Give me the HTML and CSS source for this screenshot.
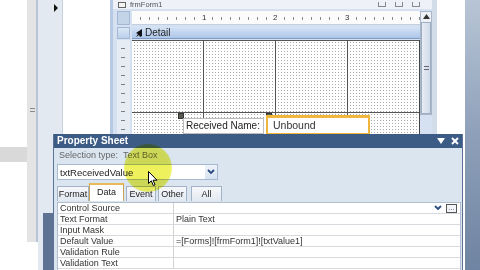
FILE: index.html
```html
<!DOCTYPE html>
<html>
<head>
<meta charset="utf-8">
<link rel="stylesheet" href="styles.css">
</head>
<body>
<div class="app">
  <div class="gutter"><div class="gutter-block"></div></div>
  <div class="vscroll"><div class="vscroll-grip"></div></div>
  <div class="pane"><div class="pane-arrow"></div><div class="pane-dark"></div></div>
  <div class="nav"></div>
  <div class="formwin">
    <div class="fw-title">
      <span class="fw-icon"></span>
      <span class="fw-title-text">frmForm1</span>
      <span class="fw-btns"><i></i><i></i><i></i></span>
    </div>
    <div class="fw-body">
      <div class="fw-left">
        <div class="corner"></div>
        <div class="selector"></div>
        <div class="vruler"></div>
      </div>
      <div class="fw-main">
        <div class="hruler">
          <span class="rnum n1">1</span><span class="rnum n2">2</span><span class="rnum n3">3</span>
        </div>
        <div class="detail-bar">
          <svg class="detail-ico" width="8" height="8" viewBox="0 0 8 8"><path d="M7 0 L1 4 L3 5 L1 8 L4 6 L5 8 L7 7 Z" fill="#111"/></svg>
          <span>Detail</span>
        </div>
        <div class="grid">
          <div class="handle h1"></div>
          <div class="handle h2"></div>
          <div class="ctl-label">Received Name:</div>
          <div class="ctl-text">Unbound</div>
        </div>
      </div>
      <div class="fw-scroll">
        <div class="sb-track">
          <svg class="sb-up" width="7" height="5" viewBox="0 0 7 5"><path d="M0 5 L3.5 0 L7 5 Z" fill="#333"/></svg>
          <div class="sb-thumb"><div class="sb-grip"></div></div>
        </div>
      </div>
    </div>
  </div>
  <div class="right-gap"></div>
  <div class="right-strip"></div>
</div>

<div class="propsheet">
  <div class="ps-title">
    <span>Property Sheet</span>
    <span class="ps-title-btns">
      <svg width="8" height="6" viewBox="0 0 8 6"><path d="M0 0 H8 L4 6 Z" fill="#fff"/></svg>
      <svg width="8" height="8" viewBox="0 0 8 8"><path d="M1 1 L7 7 M7 1 L1 7" stroke="#fff" stroke-width="2"/></svg>
    </span>
  </div>
  <div class="ps-body">
    <div class="ps-sel">Selection type:&nbsp;&nbsp;Text Box</div>
    <div class="ps-combo">
      <span class="ps-combo-text">txtReceivedValue</span>
      <span class="ps-combo-btn"><svg width="8" height="6" viewBox="0 0 8 6"><path d="M1 1 L4 4 L7 1" fill="none" stroke="#2b4a80" stroke-width="1.8"/></svg></span>
    </div>
    <div class="ps-tabs">
      <span class="tab t-format">Format</span>
      <span class="tab t-data">Data</span>
      <span class="tab t-event">Event</span>
      <span class="tab t-other">Other</span>
      <span class="tab t-all">All</span>
    </div>
    <div class="ps-grid">
      <div class="row"><span class="k">Control Source</span><span class="v"><span class="v-btns"><svg width="8" height="6" viewBox="0 0 8 6"><path d="M1 1 L4 4 L7 1" fill="none" stroke="#2b4a80" stroke-width="1.8"/></svg><span class="dots">...</span></span></span></div>
      <div class="row"><span class="k">Text Format</span><span class="v">Plain Text</span></div>
      <div class="row"><span class="k">Input Mask</span><span class="v"></span></div>
      <div class="row"><span class="k">Default Value</span><span class="v">=[Forms]![frmForm1]![txtValue1]</span></div>
      <div class="row"><span class="k">Validation Rule</span><span class="v"></span></div>
      <div class="row"><span class="k">Validation Text</span><span class="v"></span></div>
    </div>
  </div>
</div>

<div class="highlight"></div>
<svg class="cursor" width="10" height="16" viewBox="0 0 10 16"><path d="M0.5 0.5 L0.5 12.5 L3.3 9.8 L5.3 14.5 L7 13.8 L5.1 9.2 L9 9.2 Z" fill="#fff" stroke="#000" stroke-width="1"/></svg>
</body>
</html>
```

FILE: styles.css
```css
* { box-sizing: border-box; }
body {
  margin: 0;
  width: 480px;
  height: 270px;
  overflow: hidden;
  background: #fff;
  font-family: "Liberation Sans", Arial, sans-serif;
  position: relative;
}
.app { display: flex; height: 270px; }

.gutter { width: 27px; display: flex; flex-direction: column; }
.gutter-block { margin-top: 147px; height: 15px; background: #d9d9d9; }

.vscroll { width: 11px; background: #e4e4e4; border-right: 2px solid #b8c5d8; padding-top: 108px; height: 242px; }
.vscroll-grip { margin-left: 3px; width: 5px; height: 4px; border-top: 1px solid #8a8a8a; border-bottom: 1px solid #8a8a8a; }

.pane { width: 25px; background: #e3e9f1; border-right: 1px solid #c9d3e0; display: flex; flex-direction: column; align-items: flex-end; padding: 4px 4px 0 0; }
.pane-arrow { width: 0; height: 0; border-top: 4px solid transparent; border-bottom: 4px solid transparent; border-left: 4px solid #111; }
.pane-dark { margin-top: auto; align-self: flex-start; margin-left: 5px; width: 12px; height: 57px; background: #5e7393; }

.nav { width: 47px; background: #fff; }

.formwin {
  width: 322px;
  background: #d5e1f0;
  border-left: 3px solid #b6c9e2;
  display: flex;
  flex-direction: column;
}
.fw-title { height: 9px; overflow: hidden; display: flex; align-items: center; background: #eef2f8; padding-left: 5px; }
.fw-icon { width: 8px; height: 6px; border: 1px solid #666; background: #f4f4f4; margin-right: 4px; }
.fw-title-text { font-size: 7.5px; line-height: 8px; color: #555; }
.fw-btns { margin-left: auto; display: flex; gap: 9px; padding-right: 12px; }
.fw-btns i { width: 8px; height: 5px; border: 1px solid #888; border-top: none; }

.fw-body { flex: 1; display: flex; padding-top: 2px; }
.fw-left { width: 19px; display: flex; flex-direction: column; padding: 0 2px 0 4px; }
.corner { height: 14px; background: #c3d3e8; border: 1px solid #a4b8d4; }
.selector { height: 12px; margin-top: 2px; background: linear-gradient(#dae6f6, #bccfea); border: 1px solid #a4b8d4; }
.vruler {
  flex: 1; margin-top: 1px;
  background:
    repeating-linear-gradient(transparent 0 8px, #7d7d7d 8px 9px) 4px 0 / 4px 100% no-repeat,
    #e6ecf4;
}

.fw-main { width: 288px; display: flex; flex-direction: column; }
.hruler {
  height: 14px; position: relative;
  background:
    repeating-linear-gradient(90deg, transparent 0 8px, #8a8a8a 8px 9px) 0 6px / 100% 3px no-repeat,
    #fbfbfb;
  border-bottom: 1px solid #c2cfe0;
}
.rnum { position: absolute; top: 2px; font-size: 8px; line-height: 9px; color: #333; background: #fbfbfb; padding: 0 1px; }
.n1 { left: 69px; } .n2 { left: 140px; } .n3 { left: 212px; }

.detail-bar {
  height: 12px; margin-top: 2px;
  background: linear-gradient(#d5e3f6, #adc6e8);
  border-bottom: 1px solid #7f9cc6;
  display: flex; align-items: center; gap: 2px; padding-left: 3px;
  font-size: 10px; color: #222;
}
.grid {
  flex: 1; margin-top: 1px; position: relative;
  border-right: 1px solid #444;
  background:
    linear-gradient(90deg, #555 1px, transparent 1px) 71px 0 / 72px 100%,
    linear-gradient(#555 1px, transparent 1px) 0 72px / 100% 72px,
    linear-gradient(90deg, #fff 2px, transparent 2px) 0 0 / 3px 3px,
    linear-gradient(#fff 2px, #a9a9a9 2px) 0 0 / 3px 3px;
}
.handle { position: absolute; top: 73px; width: 6px; height: 6px; background: #5a5a52; border: 1px solid #333; }
.h1 { left: 46px; } .h2 { left: 134px; }
.ctl-label {
  position: absolute; left: 51px; top: 78px; width: 81px; height: 16px;
  background: #fff; border: 1px solid #bdbdbd;
  font-size: 10px; line-height: 14px; padding-left: 2px; color: #222; white-space: nowrap;
}
.ctl-text {
  position: absolute; left: 134px; top: 75px; width: 104px; height: 20px;
  background: #fff; border: 2px solid #f1b73c; border-top-width: 3px;
  font-size: 10.5px; line-height: 14px; padding-left: 5px; color: #333;
}

.fw-scroll { width: 12px; }
.sb-track { height: 104px; background: #eef2f7; border: 1px solid #a9b6c8; display: flex; flex-direction: column; align-items: center; padding-top: 2px; }
.sb-thumb { margin-top: 3px; flex: 1; width: 10px; background: linear-gradient(90deg, #e8edf4, #d0dae8); border: 1px solid #9eaec4; display: flex; align-items: center; justify-content: center; }
.sb-grip { width: 5px; height: 4px; border-top: 1px solid #667; border-bottom: 1px solid #667; }

.right-gap { width: 33px; background: #fff; border-left: 5px solid #d3ddea; }
.right-strip { flex: 1; background: linear-gradient(#b8c5d6, #8ea0b9 50%, #6f84a2); }

/* property sheet - floating window */
.propsheet {
  position: absolute; left: 53px; top: 134px; width: 410px; height: 136px;
  background: #dbe5f0;
  border-left: 1px solid #5b7397; border-right: 1px solid #5b7397;
  display: flex; flex-direction: column;
}
.ps-title {
  height: 14px; background: #3c5b85; color: #fff;
  font-size: 10px; font-weight: bold; line-height: 14px; padding-left: 3px;
  display: flex; align-items: center;
}
.ps-title-btns { margin-left: auto; display: flex; gap: 6px; align-items: center; padding-right: 3px; }
.ps-body { flex: 1; padding: 0 0 0 3px; display: flex; flex-direction: column; }
.ps-sel { height: 15px; font-size: 9px; line-height: 15px; color: #666; padding-left: 2px; }
.ps-combo {
  margin-top: 1px; width: 161px; height: 16px;
  background: #fff; border: 1px solid #a7b9d1;
  display: flex; align-items: center;
  font-size: 9.5px; color: #222;
}
.ps-combo-text { padding-left: 2px; }
.ps-combo-btn { margin-left: auto; width: 12px; height: 14px; display: flex; align-items: center; justify-content: center; background: linear-gradient(#eef3fa, #d6e2f2); }
.ps-tabs { height: 21px; display: flex; align-items: flex-end; padding-top: 2px; }
.tab {
  height: 15px; font-size: 9px; line-height: 14px; color: #222;
  background: linear-gradient(#f6f8fb, #e3e9f1);
  border: 1px solid #a3b2c6; border-bottom: none;
  padding: 0; margin-right: 2px; text-align: center; white-space: nowrap;
}
.t-format { width: 32px; margin-right: 0; }
.t-data { width: 35px; height: 18px; background: #fff; line-height: 15px; border-color: #c7a45a; border-top: 2px solid #e9b95a; }
.t-event { width: 30px; }
.t-other { width: 29px; margin-right: 4px; }
.t-all { width: 31px; }
.ps-grid {
  flex: 1; margin-top: 1px; margin-right: 1px;
  background: #fff; border: 1px solid #b3bfce; border-bottom: none;
  display: flex; flex-direction: column;
}
.row { height: 11px; display: flex; border-bottom: 1px solid #d6d9dd; font-size: 9px; line-height: 10px; color: #333; }
.k { width: 116px; border-right: 1px solid #d2d2d2; padding-left: 2px; white-space: nowrap; }
.v { flex: 1; padding-left: 2px; display: flex; white-space: nowrap; }
.v-btns { margin-left: auto; display: flex; align-items: center; gap: 4px; padding-right: 3px; }
.dots { width: 11px; height: 9px; border: 1px solid #555; background: #f2f4f7; font-size: 7px; line-height: 5px; text-align: center; }

.highlight {
  position: absolute; left: 124px; top: 144px; width: 48px; height: 48px; border-radius: 50%;
  background: radial-gradient(circle, #eef05c 60%, #f2f48c 85%, rgba(255,255,255,0) 100%);
  mix-blend-mode: multiply;
}
.cursor { position: absolute; left: 148px; top: 171px; }
```
